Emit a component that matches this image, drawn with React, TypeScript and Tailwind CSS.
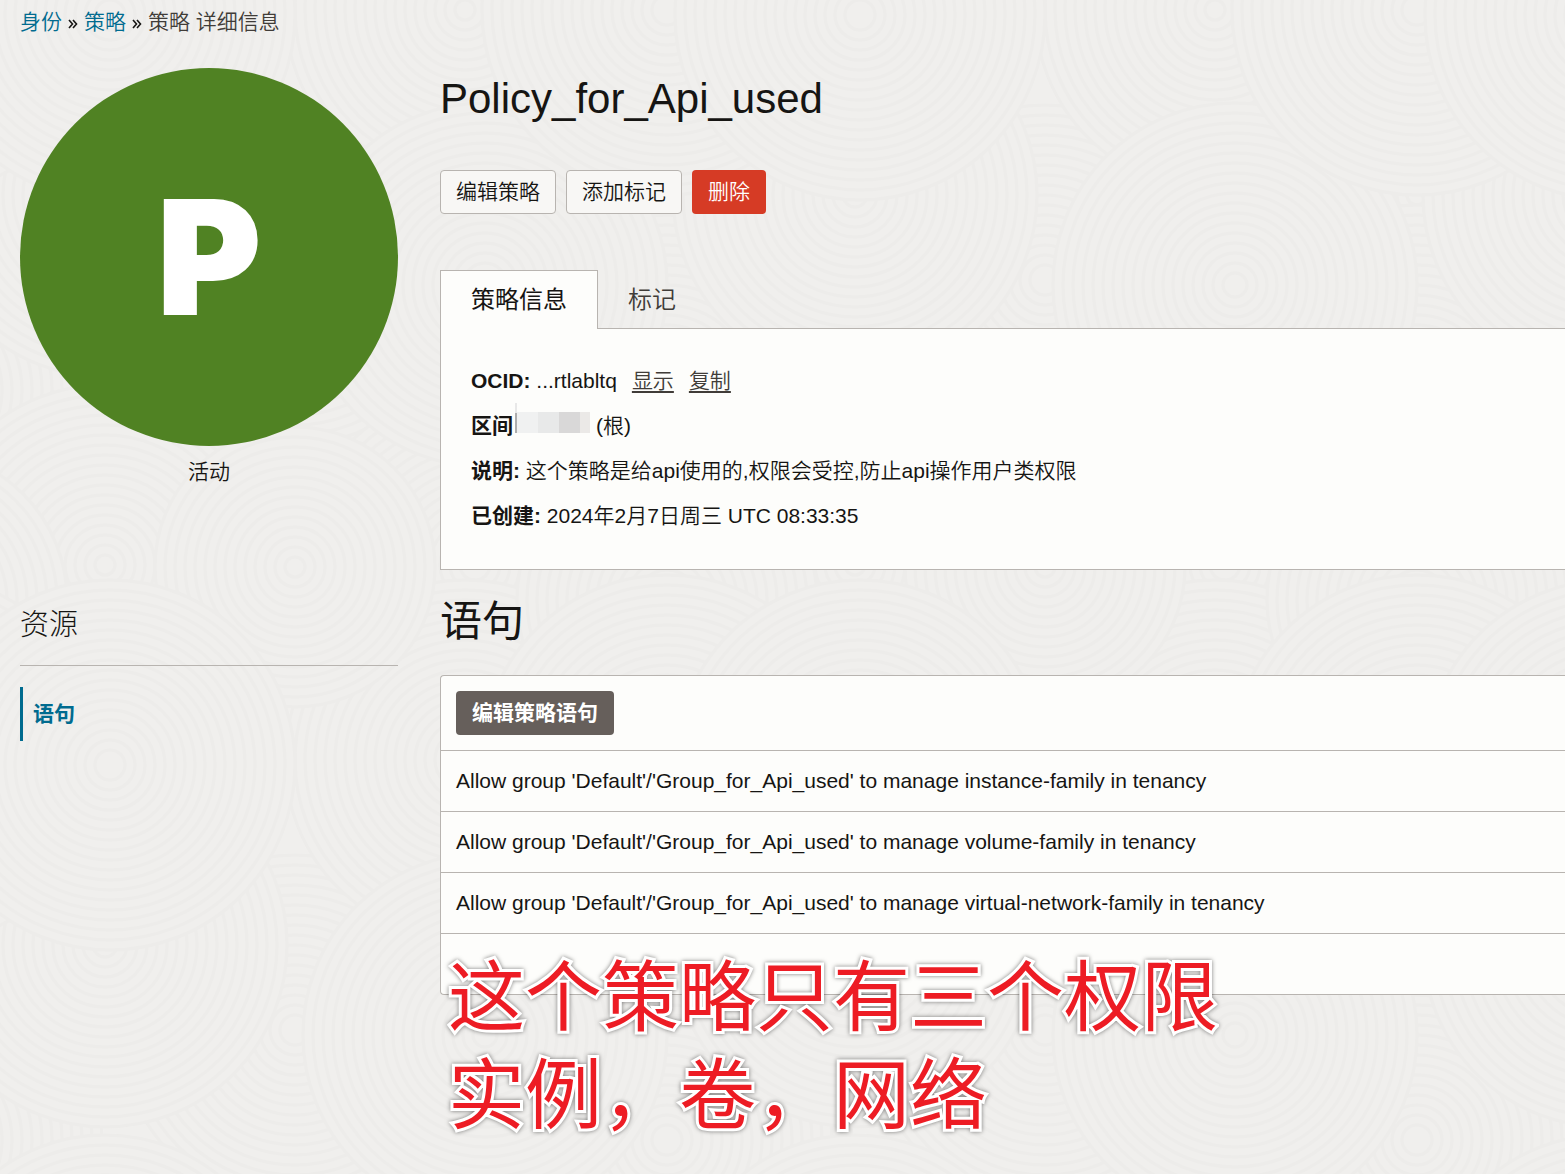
const statements = [
  "Allow group 'Default'/'Group_for_Api_used' to manage instance-family in tenancy",
  "Allow group 'Default'/'Group_for_Api_used' to manage volume-family in tenancy",
  "Allow group 'Default'/'Group_for_Api_used' to manage virtual-network-family in tenancy",
]

const TILE = 750

// Discs of the page texture, painted in order so that later ones cover earlier ones
const discs = [
  { x: 667, y: 195, r: 180 },
  { x: 295, y: 280, r: 175 },
  { x: 667, y: 390, r: 185 },
  { x: 475, y: 565, r: 175 },
  { x: 465, y: 10, r: 180 },
  { x: 485, y: 285, r: 182 },
  { x: 105, y: 195, r: 182 },
  { x: 105, y: 565, r: 180 },
  { x: 295, y: 567, r: 140 },
  { x: 667, y: 600, r: 150 },
  { x: 667, y: 10, r: 185 },
  { x: 110, y: 15, r: 185 },
]

// Copies that run over the tile's edges, so that the pattern joins without a seam
const wrapped = discs.flatMap((disc) =>
  [-TILE, 0, TILE].flatMap((dx) => [-TILE, 0, TILE].map((dy) => ({ x: disc.x + dx, y: disc.y + dy, r: disc.r })))
).filter(({ x, y, r }) => x + r > 0 && x - r < TILE && y + r > 0 && y - r < TILE)

function Texture() {
  return (
    <svg aria-hidden="true" className="absolute inset-0 -z-10 h-full w-full">
      <defs>
        <pattern id="rings" width={TILE} height={TILE} patternUnits="userSpaceOnUse">
          {wrapped.map((disc) => (
            <g key={`${disc.x}-${disc.y}`} fill="#f0efed" stroke="#edecea" strokeWidth="3">
              {Array.from({ length: Math.floor(disc.r / 10) }, (_, i) => (
                <circle key={i} cx={disc.x} cy={disc.y} r={disc.r - i * 10} />
              ))}
            </g>
          ))}
        </pattern>
      </defs>
      <rect width="100%" height="100%" fill="url(#rings)" />
    </svg>
  )
}

function Chevrons() {
  return (
    <svg aria-hidden="true" viewBox="0 0 10 10" className="mt-1 h-[10px] w-[10px]" fill="none" stroke="#161513" strokeWidth="1.6">
      <path d="M1 1 4.5 5 1 9M5 1 8.5 5 5 9" />
    </svg>
  )
}

function Sidebar() {
  return (
    <aside className="w-[378px] shrink-0">
      <div className="flex aspect-square w-full items-center justify-center rounded-full bg-[#508223]">
        <span className="font-['Inter',sans-serif] text-[157px] leading-none font-black text-white [-webkit-text-stroke:2px_white]">P</span>
      </div>
      <p className="mt-2 text-center leading-9">活动</p>
      <h2 className="mt-[110px] border-b border-[#b8b4b0] pb-[15px] text-[29px] leading-[50px] font-light">资源</h2>
      <nav className="mt-[21px]">
        <a href="#statements" className="block border-l-3 border-[#006b8f] pl-[10px] leading-[54px] font-bold text-[#006b8f]">
          语句
        </a>
      </nav>
    </aside>
  )
}

function PolicyInfo() {
  return (
    <section>
      <div role="tablist" className="relative z-10 -mb-px flex text-[24px]">
        <button role="tab" aria-selected="true" className="h-[59px] border border-b-0 border-[#b8b4b0] bg-[#fdfdfb] px-[30px] font-normal">
          策略信息
        </button>
        <button role="tab" aria-selected="false" className="h-[59px] px-[30px] text-[#403c38]">
          标记
        </button>
      </div>
      <div className="border border-r-0 border-[#b8b4b0] bg-[#fdfdfb] px-[30px] pt-[29px] pb-[31px] leading-[45px]">
        <p>
          <b>OCID:</b> ...rtlabltq
          <a href="#show" className="ml-[15px] text-[#403c38] underline underline-offset-3">显示</a>
          <a href="#copy" className="ml-[15px] text-[#403c38] underline underline-offset-3">复制</a>
        </p>
        <p className="flex">
          <b>区间</b>
          <span className="ml-[2px] flex h-[30px]">
            <span className="w-[2px] bg-linear-to-b from-[#e8e8e8] from-32% to-[#adadad] to-32%" />
            <span className="mt-[9px] w-[21px] bg-[#f0f1f1]" />
            <span className="mt-[9px] w-[21px] bg-[#e8e9e9]" />
            <span className="mt-[9px] w-[21px] bg-[#d9d8d8]" />
            <span className="mt-[9px] w-[10px] bg-[#ebe9e7]" />
          </span>
          <span className="ml-[6px]">(根)</span>
        </p>
        <p>
          <b>说明:</b> 这个策略是给api使用的,权限会受控,防止api操作用户类权限
        </p>
        <p>
          <b>已创建:</b> 2024年2月7日周三 UTC 08:33:35
        </p>
      </div>
    </section>
  )
}

function Statements() {
  return (
    <section id="statements" className="relative">
      <h2 className="pt-[22px] pb-[23px] text-[42px] leading-[60px] font-normal">语句</h2>
      <div className="rounded-l border border-r-0 border-[#b8b4b0] bg-[#fdfdfb]">
        <div className="p-[15px]">
          <button className="h-11 rounded bg-[#665f5b] px-4 font-bold text-white">编辑策略语句</button>
        </div>
        <ul>
          {statements.map((statement) => (
            <li key={statement} className="border-t border-[#b8b4b0] px-[15px] leading-[60px]">
              {statement}
            </li>
          ))}
        </ul>
        <div className="h-[61px] border-t border-[#b8b4b0]" />
      </div>
      <p className="absolute top-full left-2 -mt-[46px] text-[77px] leading-[98px] font-normal whitespace-nowrap text-[#ed1c24] drop-shadow-[0_0_2px_#00000080] [-webkit-text-stroke:6px_white] [paint-order:stroke_fill]">
        这个策略只有三个权限
        <br />
        实例，卷，网络
      </p>
    </section>
  )
}

export default function App() {
  return (
    <div
      lang="zh-CN"
      className="relative isolate min-h-screen overflow-hidden bg-[#f0efed] pl-5 font-['Liberation_Sans','Noto_Sans_CJK_SC',sans-serif] text-[21px] font-[350] text-[#161513]"
    >
      <Texture />
      <nav className="flex h-11 items-center gap-[6px] text-[#403c38]">
        <a href="#identity" className="text-[#006b8f]">身份</a>
        <Chevrons />
        <a href="#policies" className="text-[#006b8f]">策略</a>
        <Chevrons />
        <span>策略 详细信息</span>
      </nav>
      <div className="mt-6 flex gap-[42px]">
        <Sidebar />
        <main className="min-w-0 flex-1">
          <h1 className="text-[42px] leading-[62px]">Policy_for_Api_used</h1>
          <div className="mt-10 mb-14 flex gap-[10px]">
            <button className="h-11 rounded border border-[#b8b4b0] bg-[#f8f7f5] px-[15px]">编辑策略</button>
            <button className="h-11 rounded border border-[#b8b4b0] bg-[#f8f7f5] px-[15px]">添加标记</button>
            <button className="h-11 rounded bg-[#d63b25] px-4 text-white">删除</button>
          </div>
          <PolicyInfo />
          <Statements />
        </main>
      </div>
    </div>
  )
}
